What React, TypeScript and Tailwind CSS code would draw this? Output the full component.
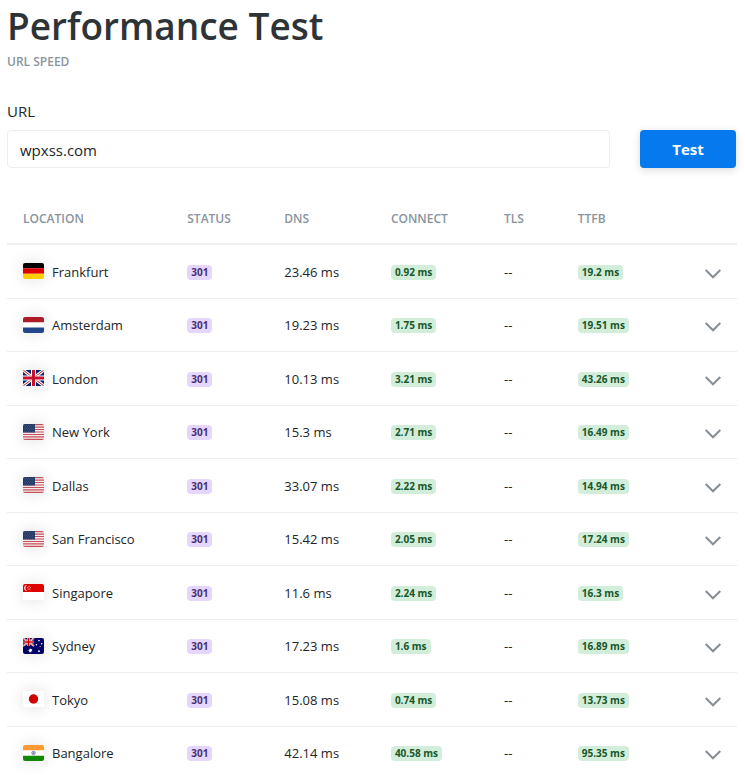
import type { ReactNode } from 'react'

type Country = 'de' | 'nl' | 'gb' | 'us' | 'sg' | 'au' | 'jp' | 'in'

const results: { city: string; country: Country; dns: string; connect: string; ttfb: string }[] = [
  { city: 'Frankfurt', country: 'de', dns: '23.46 ms', connect: '0.92 ms', ttfb: '19.2 ms' },
  { city: 'Amsterdam', country: 'nl', dns: '19.23 ms', connect: '1.75 ms', ttfb: '19.51 ms' },
  { city: 'London', country: 'gb', dns: '10.13 ms', connect: '3.21 ms', ttfb: '43.26 ms' },
  { city: 'New York', country: 'us', dns: '15.3 ms', connect: '2.71 ms', ttfb: '16.49 ms' },
  { city: 'Dallas', country: 'us', dns: '33.07 ms', connect: '2.22 ms', ttfb: '14.94 ms' },
  { city: 'San Francisco', country: 'us', dns: '15.42 ms', connect: '2.05 ms', ttfb: '17.24 ms' },
  { city: 'Singapore', country: 'sg', dns: '11.6 ms', connect: '2.24 ms', ttfb: '16.3 ms' },
  { city: 'Sydney', country: 'au', dns: '17.23 ms', connect: '1.6 ms', ttfb: '16.89 ms' },
  { city: 'Tokyo', country: 'jp', dns: '15.08 ms', connect: '0.74 ms', ttfb: '13.73 ms' },
  { city: 'Bangalore', country: 'in', dns: '42.14 ms', connect: '40.58 ms', ttfb: '95.35 ms' },
]

const flags: Record<Country, ReactNode> = {
  de: (
    <>
      <path fill="#000" d="M0 0h21v5.3H0z" />
      <path fill="#d00" d="M0 5.3h21v5.4H0z" />
      <path fill="#ffce00" d="M0 10.7h21V16H0z" />
    </>
  ),
  nl: (
    <>
      <path fill="#fff" d="M0 0h21v16H0z" />
      <path fill="#ae1c28" d="M0 0h21v5.3H0z" />
      <path fill="#21468b" d="M0 10.6h21V16H0z" />
    </>
  ),
  gb: (
    <>
      <path fill="#012169" d="M0 0h21v16H0z" />
      <path stroke="#fff" strokeWidth="3" d="M0 0l21 16M21 0L0 16" />
      <path stroke="#c8102e" strokeWidth="1" d="M0 0l21 16M21 0L0 16" />
      <path stroke="#fff" strokeWidth="5" d="M10.5 0v16M0 8h21" />
      <path stroke="#c8102e" strokeWidth="3" d="M10.5 0v16M0 8h21" />
    </>
  ),
  us: (
    <>
      <path fill="#faecee" d="M0 0h21v16H0z" />
      <path
        stroke="#c4505a"
        strokeWidth="1.23"
        d="M0 .6h21M0 3.1h21M0 5.5h21M0 8h21M0 10.5h21M0 12.9h21M0 15.4h21"
      />
      <path fill="#233a68" d="M0 0h12v8.6H0z" />
      <path
        stroke="#fff"
        strokeOpacity=".45"
        strokeWidth=".5"
        strokeDasharray=".6 1.4"
        d="M1 1.3h10.5M2 2.8h9M1 4.3h10.5M2 5.8h9M1 7.3h10.5"
      />
    </>
  ),
  sg: (
    <>
      <path fill="#fff" d="M0 0h21v16H0z" />
      <path fill="#df0000" d="M0 0h21v8H0z" />
      <path fill="#fff" d="M4.2 1a3 3 0 1 0 0 6 3.3 3.3 0 0 1 0-6z" />
      <g fill="#fff">
        <circle cx="6" cy="2.3" r=".5" />
        <circle cx="4.7" cy="3.4" r=".5" />
        <circle cx="7.3" cy="3.4" r=".5" />
        <circle cx="5.2" cy="5" r=".5" />
        <circle cx="6.8" cy="5" r=".5" />
      </g>
    </>
  ),
  au: (
    <>
      <path fill="#006" d="M0 0h21v16H0z" />
      <path stroke="#fff" strokeWidth="1.6" d="M0 0l11 8M11 0L0 8" />
      <path stroke="#c00" strokeWidth=".6" d="M0 0l11 8M11 0L0 8" />
      <path stroke="#fff" strokeWidth="2.6" d="M5.5 0v8M0 4h11" />
      <path stroke="#c00" strokeWidth="1.6" d="M5.5 0v8M0 4h11" />
      <path
        fill="#fff"
        d="M7.5 10l.5 1.3 1.4-.3-.8 1.2 1 1-1.4.1-.1 1.4-.9-1-1 .8.1-1.4-1.3-.5 1.4-.5-.2-1.4 1 .6z"
      />
      <g fill="#fff">
        <circle cx="16" cy="2.6" r=".8" />
        <circle cx="13.4" cy="6.8" r=".8" />
        <circle cx="18.7" cy="5.8" r=".8" />
        <circle cx="16" cy="13.2" r=".9" />
        <circle cx="17.2" cy="8.6" r=".5" />
      </g>
    </>
  ),
  jp: (
    <>
      <path fill="#fff" d="M0 0h21v16H0z" />
      <circle cx="10.5" cy="8" r="4.7" fill="#d30000" />
    </>
  ),
  in: (
    <>
      <path fill="#fff" d="M0 0h21v16H0z" />
      <path fill="#f93" d="M0 0h21v5.3H0z" />
      <path fill="#128807" d="M0 10.7h21V16H0z" />
      <circle cx="10.5" cy="8" r="1.8" fill="#c5c5e4" stroke="#6a6ab4" strokeWidth=".7" />
      <circle cx="10.5" cy="8" r=".5" fill="#008" />
    </>
  ),
}

const Flag = ({ country }: { country: Country }) => (
  <svg
    viewBox="0 0 21 16"
    fill="none"
    aria-hidden="true"
    className="h-4 w-[21px] shrink-0 rounded-xs shadow-[0_0_16px_rgba(0,0,0,0.14)]"
  >
    {flags[country]}
  </svg>
)

const Badge = ({ className, children }: { className: string; children: ReactNode }) => (
  <span
    className={`inline-block rounded px-1 align-middle text-[10px] leading-[15px] font-bold whitespace-nowrap ${className}`}
  >
    {children}
  </span>
)

const App = () => {
  return (
    <main className="overflow-x-hidden bg-white pr-2 pl-[7px] font-['Open_Sans','Noto_Sans',sans-serif] text-[#212529]">
      <h1 className="pt-0.5 text-[37px] leading-12 font-semibold text-[#2e3338]">Performance Test</h1>
      <p className="text-xs leading-6 font-semibold text-[#8a949c] uppercase">URL Speed</p>

      <form className="mt-[25px]" onSubmit={(e) => e.preventDefault()}>
        <label htmlFor="url" className="block text-[15px] leading-6">
          URL
        </label>
        <div className="mt-[7px] flex gap-[30px] pr-px">
          <input
            id="url"
            type="text"
            defaultValue="wpxss.com"
            className="h-[38px] min-w-0 flex-1 rounded border border-[#ededee] px-3 pt-0.5 text-[15px] outline-none"
          />
          <button
            type="submit"
            className="h-[38px] w-24 rounded bg-[#0679ee] text-[15px] font-bold text-white shadow-[0_2px_8px_rgba(0,0,0,0.15)]"
          >
            Test
          </button>
        </div>
      </form>

      <table className="mt-6 w-full table-fixed text-left">
        <thead>
          <tr className="h-[52px] border-b-2 border-[#eff0f0] text-xs text-[#8a949c] uppercase">
            <th className="w-[22.5%] pt-0.5 pl-4 font-semibold">Location</th>
            <th className="w-[13.3%] pt-0.5 pl-4 font-semibold">Status</th>
            <th className="w-[14.6%] pt-0.5 pl-4 font-semibold">DNS</th>
            <th className="w-[15.5%] pt-0.5 pl-4 font-semibold">Connect</th>
            <th className="w-[10.1%] pt-0.5 pl-4 font-semibold">TLS</th>
            <th className="pt-0.5 pl-4 font-semibold">TTFB</th>
            <th className="w-14" aria-label="Details" />
          </tr>
        </thead>
        <tbody className="text-[13px]">
          {results.map((row) => (
            <tr key={row.city} className="border-b border-[#ededee] odd:h-[54px] even:h-[53px]">
              <td className="pl-4">
                <div className="flex items-center gap-2">
                  <Flag country={row.country} />
                  <span className="pt-[3px]">{row.city}</span>
                </div>
              </td>
              <td className="pt-px pl-4">
                <Badge className="bg-[#e5d6fd] text-[#4a3070]">301</Badge>
              </td>
              <td className="pt-[3px] pl-4">{row.dns}</td>
              <td className="pt-px pl-4">
                <Badge className="bg-[#d3eddb] text-[#17572a]">{row.connect}</Badge>
              </td>
              <td className="pt-[3px] pl-4">--</td>
              <td className="pt-px pl-4">
                <Badge className="bg-[#d3eddb] text-[#17572a]">{row.ttfb}</Badge>
              </td>
              <td className="pt-[3px] pr-4">
                <button type="button" aria-label={`Show ${row.city} details`} className="ml-auto block">
                  <svg width="16" height="16" viewBox="0 0 16 16" fill="none" stroke="#868e96" strokeWidth="2">
                    <path d="M.7 5L8 12.3 15.3 5" />
                  </svg>
                </button>
              </td>
            </tr>
          ))}
        </tbody>
      </table>
    </main>
  )
}

export default App
